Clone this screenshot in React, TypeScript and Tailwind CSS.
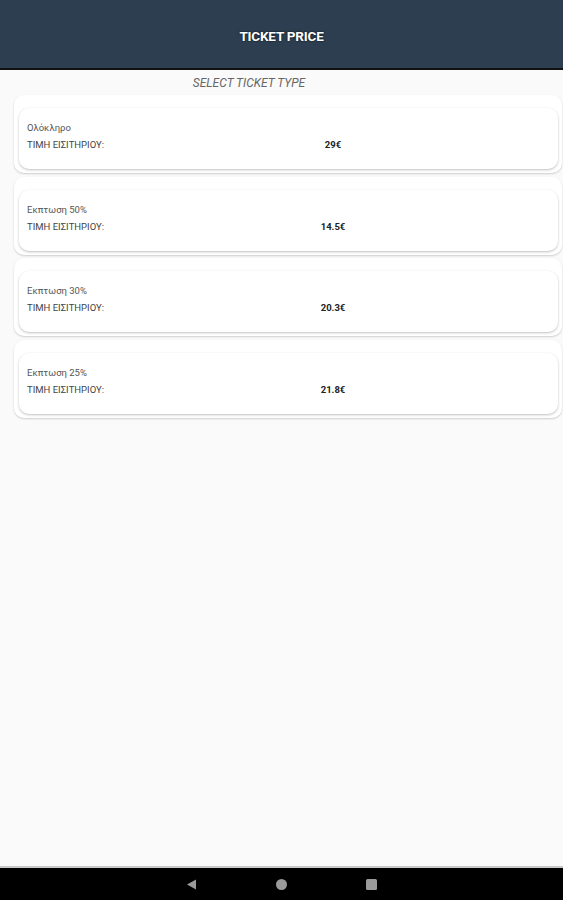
import React from "react";

const tickets = [
  { name: "Ολόκληρο", price: "29€" },
  { name: "Εκπτωση 50%", price: "14.5€" },
  { name: "Εκπτωση 30%", price: "20.3€" },
  { name: "Εκπτωση 25%", price: "21.8€" },
];

export default function App() {
  return (
    <div
      className="w-[563px] h-[900px] flex flex-col bg-[#fafafa] overflow-hidden"
      style={{ fontFamily: "Roboto, 'Noto Sans', sans-serif" }}
    >
      <div className="h-[68px] bg-[#2c3e50] flex items-center justify-center shrink-0">
        <span className="text-white font-bold text-[13.5px] tracking-[-0.2px] [text-shadow:0_0_2px_rgba(0,0,0,0.9)] mt-[5px]">
          TICKET PRICE
        </span>
      </div>
      <div className="h-[2px] bg-[#111] shrink-0" />
      <div className="flex-1 flex flex-col">
        <div className="w-[498px] flex justify-center pt-[6px] h-[25px]">
          <span className="italic text-[12px] text-[#666] leading-[14px]">SELECT TICKET TYPE</span>
        </div>
        <div className="flex flex-col gap-[3.5px]">
          {tickets.map((t) => (
            <div
              key={t.name}
              className="ml-[14px] w-[548px] h-[78px] bg-white rounded-[10px] shadow-[0_1px_2px_rgba(0,0,0,0.18)] pt-[13px] pl-[5px] pr-[4px]"
            >
              <div className="h-[61px] bg-white rounded-[10px] shadow-[0_1px_2.5px_rgba(0,0,0,0.25)] pl-[8px] pt-[11px]">
                <div className="text-[9.5px] text-[#555] leading-[17px]">{t.name}</div>
                <div className="flex text-[9.5px] leading-[17px]">
                  <span className="w-[266px] text-[#444]">ΤΙΜΗ ΕΙΣΙΤΗΡΙΟΥ:</span>
                  <span className="w-[80px] text-center font-bold text-[#222]">{t.price}</span>
                </div>
              </div>
            </div>
          ))}
        </div>
      </div>
      <div className="h-[2px] bg-[#c8c8c8] shrink-0" />
      <div className="h-[32px] bg-black flex items-center shrink-0">
        <div className="w-[563px] relative h-full">
          <svg className="absolute left-[186px] top-[11px]" width="11" height="11" viewBox="0 0 11 11">
            <path d="M10 0.5 L10 10.5 L1 5.5 Z" fill="#9a9a9a" />
          </svg>
          <div className="absolute left-[276px] top-[11px] w-[11px] h-[11px] rounded-full bg-[#9a9a9a]" />
          <div className="absolute left-[366px] top-[11px] w-[11px] h-[11px] rounded-[1.5px] bg-[#9a9a9a]" />
        </div>
      </div>
    </div>
  );
}
